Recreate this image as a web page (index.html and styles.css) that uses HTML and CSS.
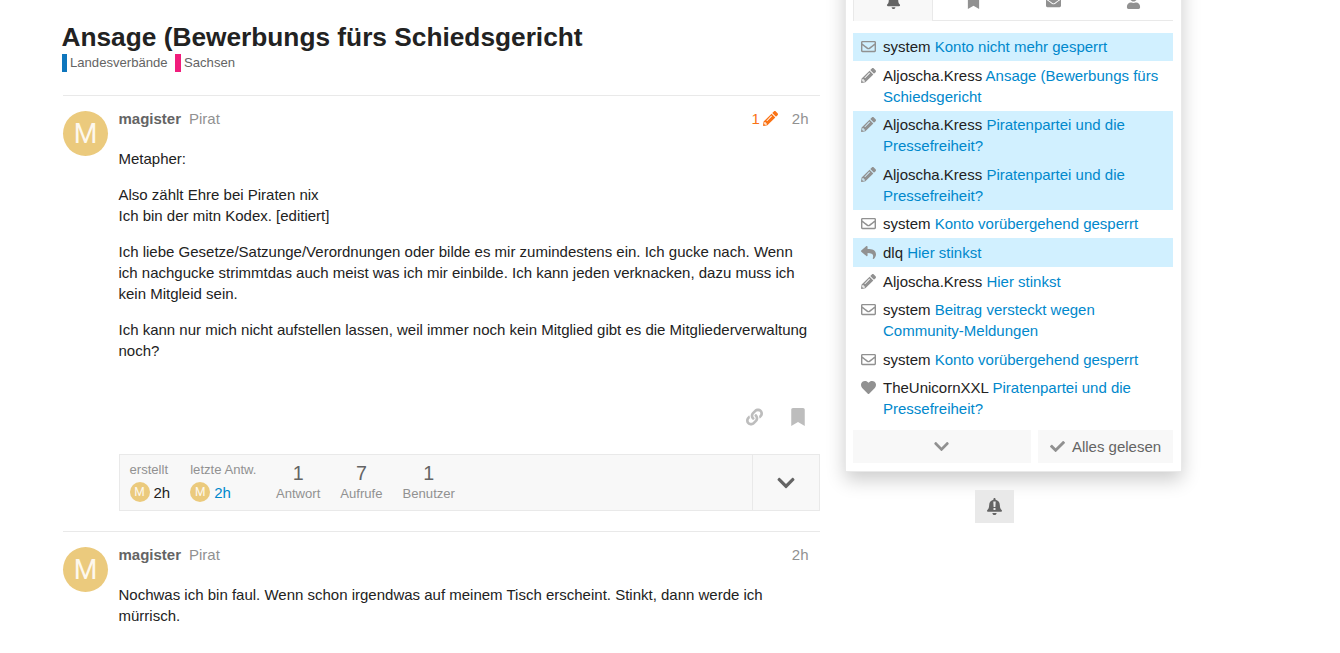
FILE: index.html
```html
<!DOCTYPE html>
<html lang="de">
<head>
<meta charset="utf-8">
<title>Ansage (Bewerbungs fürs Schiedsgericht</title>
<link rel="stylesheet" href="styles.css">
</head>
<body>
<svg class="sprite" aria-hidden="true">
  <symbol id="chevron-down" viewBox="0 0 448 512"><path d="M207.029 381.476L12.686 187.132c-9.373-9.373-9.373-24.569 0-33.941l22.667-22.667c9.357-9.357 24.522-9.375 33.901-.04L224 284.505l154.745-154.021c9.379-9.335 24.544-9.317 33.901.04l22.667 22.667c9.373 9.373 9.373 24.569 0 33.941L240.971 381.476c-9.373 9.372-24.569 9.372-33.942 0z"/></symbol>
  <symbol id="check" viewBox="0 0 512 512"><path d="M173.898 439.404l-166.4-166.4c-9.997-9.997-9.997-26.206 0-36.204l36.203-36.204c9.997-9.998 26.207-9.998 36.204 0L192 312.69 432.095 72.596c9.997-9.997 26.207-9.997 36.204 0l36.203 36.204c9.997 9.997 9.997 26.206 0 36.204l-294.4 294.401c-9.998 9.997-26.207 9.997-36.204-.001z"/></symbol>
  <symbol id="bookmark" viewBox="0 0 384 512"><path d="M0 512V48C0 21.49 21.49 0 48 0h288c26.51 0 48 21.49 48 48v464L192 400 0 512z"/></symbol>
  <symbol id="link" viewBox="0 0 512 512"><path d="M326.612 185.391c59.747 59.809 58.927 155.698.36 214.59-.11.12-.24.25-.36.37l-67.2 67.2c-59.27 59.27-155.699 59.262-214.96 0-59.27-59.26-59.27-155.7 0-214.96l37.106-37.106c9.84-9.84 26.786-3.3 27.294 10.606.648 17.722 3.826 35.527 9.69 52.721 1.986 5.822.567 12.262-3.783 16.612l-13.087 13.087c-28.026 28.026-28.905 73.66-1.155 101.96 28.024 28.579 74.086 28.749 102.325.51l67.2-67.19c28.191-28.191 28.073-73.757 0-101.83-3.701-3.694-7.429-6.564-10.341-8.569a16.037 16.037 0 0 1-6.947-12.606c-.396-10.567 3.348-21.456 11.698-29.806l21.054-21.055c5.521-5.521 14.182-6.199 20.584-1.731a152.482 152.482 0 0 1 20.522 17.197zM467.547 44.449c-59.261-59.262-155.69-59.27-214.96 0l-67.2 67.2c-.12.12-.25.25-.36.37-58.566 58.892-59.387 154.781.36 214.59a152.454 152.454 0 0 0 20.521 17.196c6.402 4.468 15.064 3.789 20.584-1.731l21.054-21.055c8.35-8.35 12.094-19.239 11.698-29.806a16.037 16.037 0 0 0-6.947-12.606c-2.912-2.005-6.64-4.875-10.341-8.569-28.073-28.073-28.191-73.639 0-101.83l67.2-67.19c28.239-28.239 74.3-28.069 102.325.51 27.75 28.3 26.872 73.934-1.155 101.96l-13.087 13.087c-4.35 4.35-5.769 10.79-3.783 16.612 5.864 17.194 9.042 34.999 9.69 52.721.509 13.906 17.454 20.446 27.294 10.606l37.106-37.106c59.271-59.259 59.271-155.699.001-214.959z"/></symbol>
  <symbol id="pencil" viewBox="0 0 512 512"><path d="M497.9 142.1l-46.1 46.1c-4.7 4.7-12.3 4.7-17 0l-111-111c-4.7-4.7-4.7-12.3 0-17l46.1-46.1c18.7-18.7 49.1-18.7 67.9 0l60.1 60.1c18.8 18.7 18.8 49.1 0 67.9zM284.2 99.8L21.6 362.4.4 483.9c-2.9 16.4 11.4 30.6 27.8 27.8l121.5-21.3 262.6-262.6c4.7-4.7 4.7-12.3 0-17l-111-111c-4.8-4.7-12.4-4.7-17.1 0zM124.1 339.9c-5.5-5.5-5.5-14.3 0-19.8l154-154c5.5-5.5 14.3-5.5 19.8 0s5.5 14.3 0 19.8l-154 154c-5.5 5.5-14.3 5.5-19.8 0zM88 424h48v36.3l-64.5 11.3-31.1-31.1L51.7 376H88v48z"/></symbol>
  <symbol id="envelope-o" viewBox="0 0 512 512"><path d="M464 64H48C21.49 64 0 85.49 0 112v288c0 26.51 21.49 48 48 48h416c26.51 0 48-21.49 48-48V112c0-26.51-21.49-48-48-48zm0 48v40.805c-22.422 18.259-58.168 46.651-134.587 106.49-16.841 13.247-50.201 45.072-73.413 44.701-23.208.375-56.579-31.459-73.413-44.701C106.18 199.465 70.425 171.067 48 152.805V112h416zM48 400V214.398c22.914 18.251 55.409 43.862 104.938 82.646 21.857 17.205 60.134 55.186 103.062 54.955 42.717.231 80.509-37.199 103.053-54.947 49.528-38.783 82.032-64.401 104.947-82.653V400H48z"/></symbol>
  <symbol id="envelope" viewBox="0 0 512 512"><path d="M502.3 190.8c3.9-3.1 9.7-.2 9.7 4.7V400c0 26.5-21.5 48-48 48H48c-26.5 0-48-21.5-48-48V195.6c0-5 5.7-7.8 9.7-4.7 22.4 17.4 52.1 39.5 154.1 113.6 21.1 15.4 56.7 47.8 92.2 47.6 35.7.3 72-32.8 92.3-47.6 102-74.1 131.6-96.3 154-113.7zM256 320c23.2.4 56.6-29.2 73.4-41.4 132.7-96.3 142.8-104.7 173.4-128.7 5.8-4.5 9.2-11.5 9.2-18.9v-19c0-26.5-21.5-48-48-48H48c-26.5 0-48 21.5-48 48v19c0 7.4 3.4 14.3 9.2 18.9 30.6 23.9 40.7 32.4 173.4 128.7 16.8 12.2 50.2 41.8 73.4 41.4z"/></symbol>
  <symbol id="user" viewBox="0 0 448 512"><path d="M224 256c70.7 0 128-57.3 128-128S294.7 0 224 0 96 57.3 96 128s57.3 128 128 128zm89.6 32h-16.7c-22.2 10.2-46.9 16-72.9 16s-50.6-5.8-72.9-16h-16.7C60.2 288 0 348.2 0 422.4V464c0 26.5 21.5 48 48 48h352c26.5 0 48-21.5 48-48v-41.6c0-74.2-60.2-134.4-134.4-134.4z"/></symbol>
  <symbol id="bell" viewBox="0 0 448 512"><path d="M224 512c35.32 0 63.97-28.65 63.97-64H160.03c0 35.35 28.65 64 63.97 64zm215.39-149.71c-19.32-20.76-55.47-51.99-55.47-154.29 0-77.7-54.48-139.9-127.94-155.16V32c0-17.67-14.32-32-31.98-32s-31.98 14.33-31.98 32v20.84C118.56 68.1 64.08 130.3 64.08 208c0 102.3-36.15 133.53-55.47 154.29-6 6.45-8.66 14.16-8.61 21.71.11 16.4 12.98 32 32.1 32h383.8c19.12 0 32-15.6 32.1-32 .05-7.55-2.61-15.27-8.61-21.71z"/></symbol>
  <symbol id="heart" viewBox="0 0 512 512"><path d="M462.3 62.6C407.5 15.9 326 24.3 275.7 76.2L256 96.5l-19.7-20.3C186.1 24.3 104.5 15.9 49.7 62.6c-62.8 53.6-66.1 149.8-9.9 207.9l193.5 199.8c12.5 12.9 32.8 12.9 45.3 0l193.5-199.8c56.3-58.1 53-154.3-9.8-207.9z"/></symbol>
  <symbol id="reply" viewBox="0 0 512 512"><path d="M8.309 189.836L184.313 37.851C199.719 24.546 224 35.347 224 56.015v80.053c160.629 1.839 288 34.032 288 186.258 0 61.441-39.581 122.309-83.333 154.132-13.653 9.931-33.111-2.533-28.077-18.631 45.344-145.012-21.507-183.51-176.59-185.742V360c0 20.7-24.3 31.453-39.687 18.164l-176.004-152c-11.071-9.562-11.086-26.753 0-36.328z"/></symbol>
</svg>
<div class="page">
  <main class="topic">
    <h1 class="title">Ansage (Bewerbungs fürs Schiedsgericht</h1>
    <div class="categories">
      <span class="category"><i class="bar blue"></i>Landesverbände</span>
      <span class="category"><i class="bar pink"></i>Sachsen</span>
    </div>
    <article class="post first">
      <div class="avatar">M</div>
      <div class="post-body">
        <header class="meta">
          <b>magister</b><span class="user-title">Pirat</span>
          <span class="edits">1<svg class="icon"><use href="#pencil"/></svg></span>
          <span class="age">2h</span>
        </header>
        <div class="cooked">
          <p>Metapher:</p>
          <p>Also zählt Ehre bei Piraten nix<br>Ich bin der mitn Kodex. [editiert]</p>
          <p>Ich liebe Gesetze/Satzunge/Verordnungen oder bilde es mir zumindestens ein. Ich gucke nach. Wenn<br>ich nachgucke strimmtdas auch meist was ich mir einbilde. Ich kann jeden verknacken, dazu muss ich<br>kein Mitgleid sein.</p>
          <p>Ich kann nur mich nicht aufstellen lassen, weil immer noch kein Mitglied gibt es die Mitgliederverwaltung<br>noch?</p>
        </div>
        <div class="actions">
          <svg class="icon link"><use href="#link"/></svg>
          <svg class="icon"><use href="#bookmark"/></svg>
        </div>
        <section class="topic-map">
          <div class="stat dated"><span class="label">erstellt</span><span class="when"><i class="mini">M</i>2h</span></div>
          <div class="stat dated latest"><span class="label">letzte Antw.</span><a class="when"><i class="mini">M</i>2h</a></div>
          <div class="stat count"><span class="number">1</span><span class="label">Antwort</span></div>
          <div class="stat count"><span class="number">7</span><span class="label">Aufrufe</span></div>
          <div class="stat count"><span class="number">1</span><span class="label">Benutzer</span></div>
          <div class="expand"><svg class="icon"><use href="#chevron-down"/></svg></div>
        </section>
      </div>
    </article>
    <article class="post">
      <div class="avatar">M</div>
      <div class="post-body">
        <header class="meta"><b>magister</b><span class="user-title">Pirat</span><span class="age">2h</span></header>
        <div class="cooked"><p>Nochwas ich bin faul. Wenn schon irgendwas auf meinem Tisch erscheint. Stinkt, dann werde ich<br>mürrisch.</p></div>
      </div>
    </article>
  </main>
  <aside class="side">
    <div class="panel">
      <nav class="tabs">
        <span class="tab active"><svg class="icon"><use href="#bell"/></svg></span>
        <span class="tab"><svg class="icon"><use href="#bookmark"/></svg></span>
        <span class="tab"><svg class="icon"><use href="#envelope"/></svg></span>
        <span class="tab"><svg class="icon"><use href="#user"/></svg></span>
      </nav>
      <ul class="notices">
        <li class="unread"><svg class="icon"><use href="#envelope-o"/></svg><p>system <a>Konto nicht mehr gesperrt</a></p></li>
        <li><svg class="icon"><use href="#pencil"/></svg><p>Aljoscha.Kress <a>Ansage (Bewerbungs fürs Schiedsgericht</a></p></li>
        <li class="unread"><svg class="icon"><use href="#pencil"/></svg><p>Aljoscha.Kress <a>Piratenpartei und die Pressefreiheit?</a></p></li>
        <li class="unread"><svg class="icon"><use href="#pencil"/></svg><p>Aljoscha.Kress <a>Piratenpartei und die Pressefreiheit?</a></p></li>
        <li><svg class="icon"><use href="#envelope-o"/></svg><p>system <a>Konto vorübergehend gesperrt</a></p></li>
        <li class="unread"><svg class="icon"><use href="#reply"/></svg><p>dlq <a>Hier stinkst</a></p></li>
        <li><svg class="icon"><use href="#pencil"/></svg><p>Aljoscha.Kress <a>Hier stinkst</a></p></li>
        <li><svg class="icon"><use href="#envelope-o"/></svg><p>system <a>Beitrag versteckt wegen Community-Meldungen</a></p></li>
        <li><svg class="icon"><use href="#envelope-o"/></svg><p>system <a>Konto vorübergehend gesperrt</a></p></li>
        <li><svg class="icon"><use href="#heart"/></svg><p>TheUnicornXXL <a>Piratenpartei und die Pressefreiheit?</a></p></li>
      </ul>
      <div class="panel-foot">
        <button class="btn more"><svg class="icon"><use href="#chevron-down"/></svg></button>
        <button class="btn read"><svg class="icon"><use href="#check"/></svg>Alles gelesen</button>
      </div>
    </div>
    <button class="btn tracking">
      <svg class="icon"><use href="#bell"/><path class="mark" d="M6.3 3.4h2.4l-.3 5.6H6.6zM6.5 10h2v1.9h-2z"/></svg>
    </button>
  </aside>
</div>
</body>
</html>
```
FILE: styles.css
```css
* { box-sizing: border-box; }
body {
  margin: 0;
  height: 653px;
  overflow: hidden;
  background: #fff;
  color: #222;
  font: 15px/21px "Liberation Sans", Arial, sans-serif;
}
h1, p, ul { margin: 0; padding: 0; }
i { font-style: normal; }
a { color: #08c; }
.sprite { display: none; }
.icon { width: 15px; height: 15px; fill: currentColor; flex: none; display: block; }

.page { display: flex; align-items: flex-start; height: 653px; }
.topic { width: 758.5px; margin-left: 61.5px; padding-top: 21px; flex: none; }
.title { font-size: 26.27px; line-height: 32px; font-weight: bold; white-space: nowrap; }
.categories { display: flex; gap: 7.5px; height: 18px; margin-top: 1px; }
.category { display: flex; font-size: 13.1px; line-height: 18px; color: #646464; }
.bar { width: 5px; height: 18px; margin-right: 3.5px; }
.blue { background: #0e76bd; }
.pink { width: 6px; margin-right: 3px; background: #f11d7c; }

.post { display: flex; margin-left: 1.5px; border-top: 1px solid #e9e9e9; padding-top: 15px; }
.post.first { margin-top: 23px; }
.avatar {
  width: 45px; height: 45px; margin-right: 10.5px; border-radius: 50%;
  background: #ebca7d; color: #fdf8ee; flex: none;
  font: 27px/46px Roboto, sans-serif; text-align: center;
}
.post-body { flex: 1; min-width: 0; }
.meta { display: flex; height: 16px; line-height: 16px; padding-right: 11.5px; color: #919191; }
.meta b { color: #646464; margin-right: 8px; }
.user-title { margin-right: auto; }
.edits { display: flex; color: #fa7316; gap: 3px; margin-right: 14px; }
.cooked { padding-top: 21px; white-space: nowrap; }
.cooked p { margin-bottom: 15px; }
.actions { display: flex; justify-content: flex-end; gap: 26px; margin-top: 35px; padding: 12px 13px 0 0; color: #bdbdbd; }
.actions .icon { width: 18px; height: 18px; }
.actions .link { width: 17px; }

.topic-map {
  display: flex; height: 57px; margin: 28px 0 20px .5px;
  background: #f8f8f8; border: 1px solid #e9e9e9; color: #646464;
}
.stat { display: flex; flex-direction: column; margin-right: 20px; }
.label { font-size: 13.1px; line-height: 18px; color: #919191; }
.dated { margin-left: 9.5px; padding-top: 6px; margin-right: 10.5px; }
.latest { margin-right: 19.5px; }
.when { display: flex; align-items: flex-start; gap: 4px; height: 21px; margin-top: 3px; }
span.when { color: #222; }
.mini { width: 20px; height: 20px; border-radius: 50%; background: #ebca7d; color: #fdf8ee; font: 12px/20px Roboto, sans-serif; text-align: center; }
.count { align-items: center; padding-top: 8px; }
.number { font-size: 19.7px; line-height: 20px; height: 22px; }
.expand { display: flex; align-items: center; justify-content: center; width: 67px; margin-left: auto; border-left: 1px solid #e9e9e9; }
.expand .icon { width: 18px; height: 20px; }

.side { width: 337px; margin-left: 25px; flex: none; display: flex; flex-direction: column; align-items: flex-start; }
.panel {
  width: 337px; height: 512px; margin-top: -40px; padding: 16px 8px 0 7px;
  border: 1px solid #e9e9e9; background: #fff; box-shadow: 0 8px 18px rgba(0, 0, 0, .2);
}
.tabs { display: grid; grid-template-columns: repeat(4, 1fr); height: 44px; color: #919191; }
.tab { display: flex; justify-content: center; padding-top: 17px; border-bottom: 1px solid #e9e9e9; }
.tab.active { color: #646464; background: #f8f8f8; border: 1px solid #e9e9e9; border-bottom: 0; padding-top: 16px; }
.notices { margin-top: 11.58px; list-style: none; }
.notices li { display: flex; padding: 3.766px 8px; }
.notices .icon { margin: 3px 7px 0 0; color: #919191; }
.unread { background: #d1f0ff; }
.panel-foot { display: flex; gap: 7px; margin-top: 7.1px; }
.btn { display: flex; align-items: center; justify-content: center; height: 33px; border: 0; padding: 0; background: #f8f8f8; color: #646464; font: inherit; }
.btn .icon { color: #919191; }
.more { width: 178px; padding-right: 1px; }
.more .icon { width: 17px; height: 17px; }
.read { width: 135px; gap: 7px; }
.tracking { width: 39px; margin: 18px 0 0 130px; background: #e9e9e9; }
.tracking .icon { width: 15px; height: 17px; color: #646464; }
.mark { fill: #e9e9e9; }
```
